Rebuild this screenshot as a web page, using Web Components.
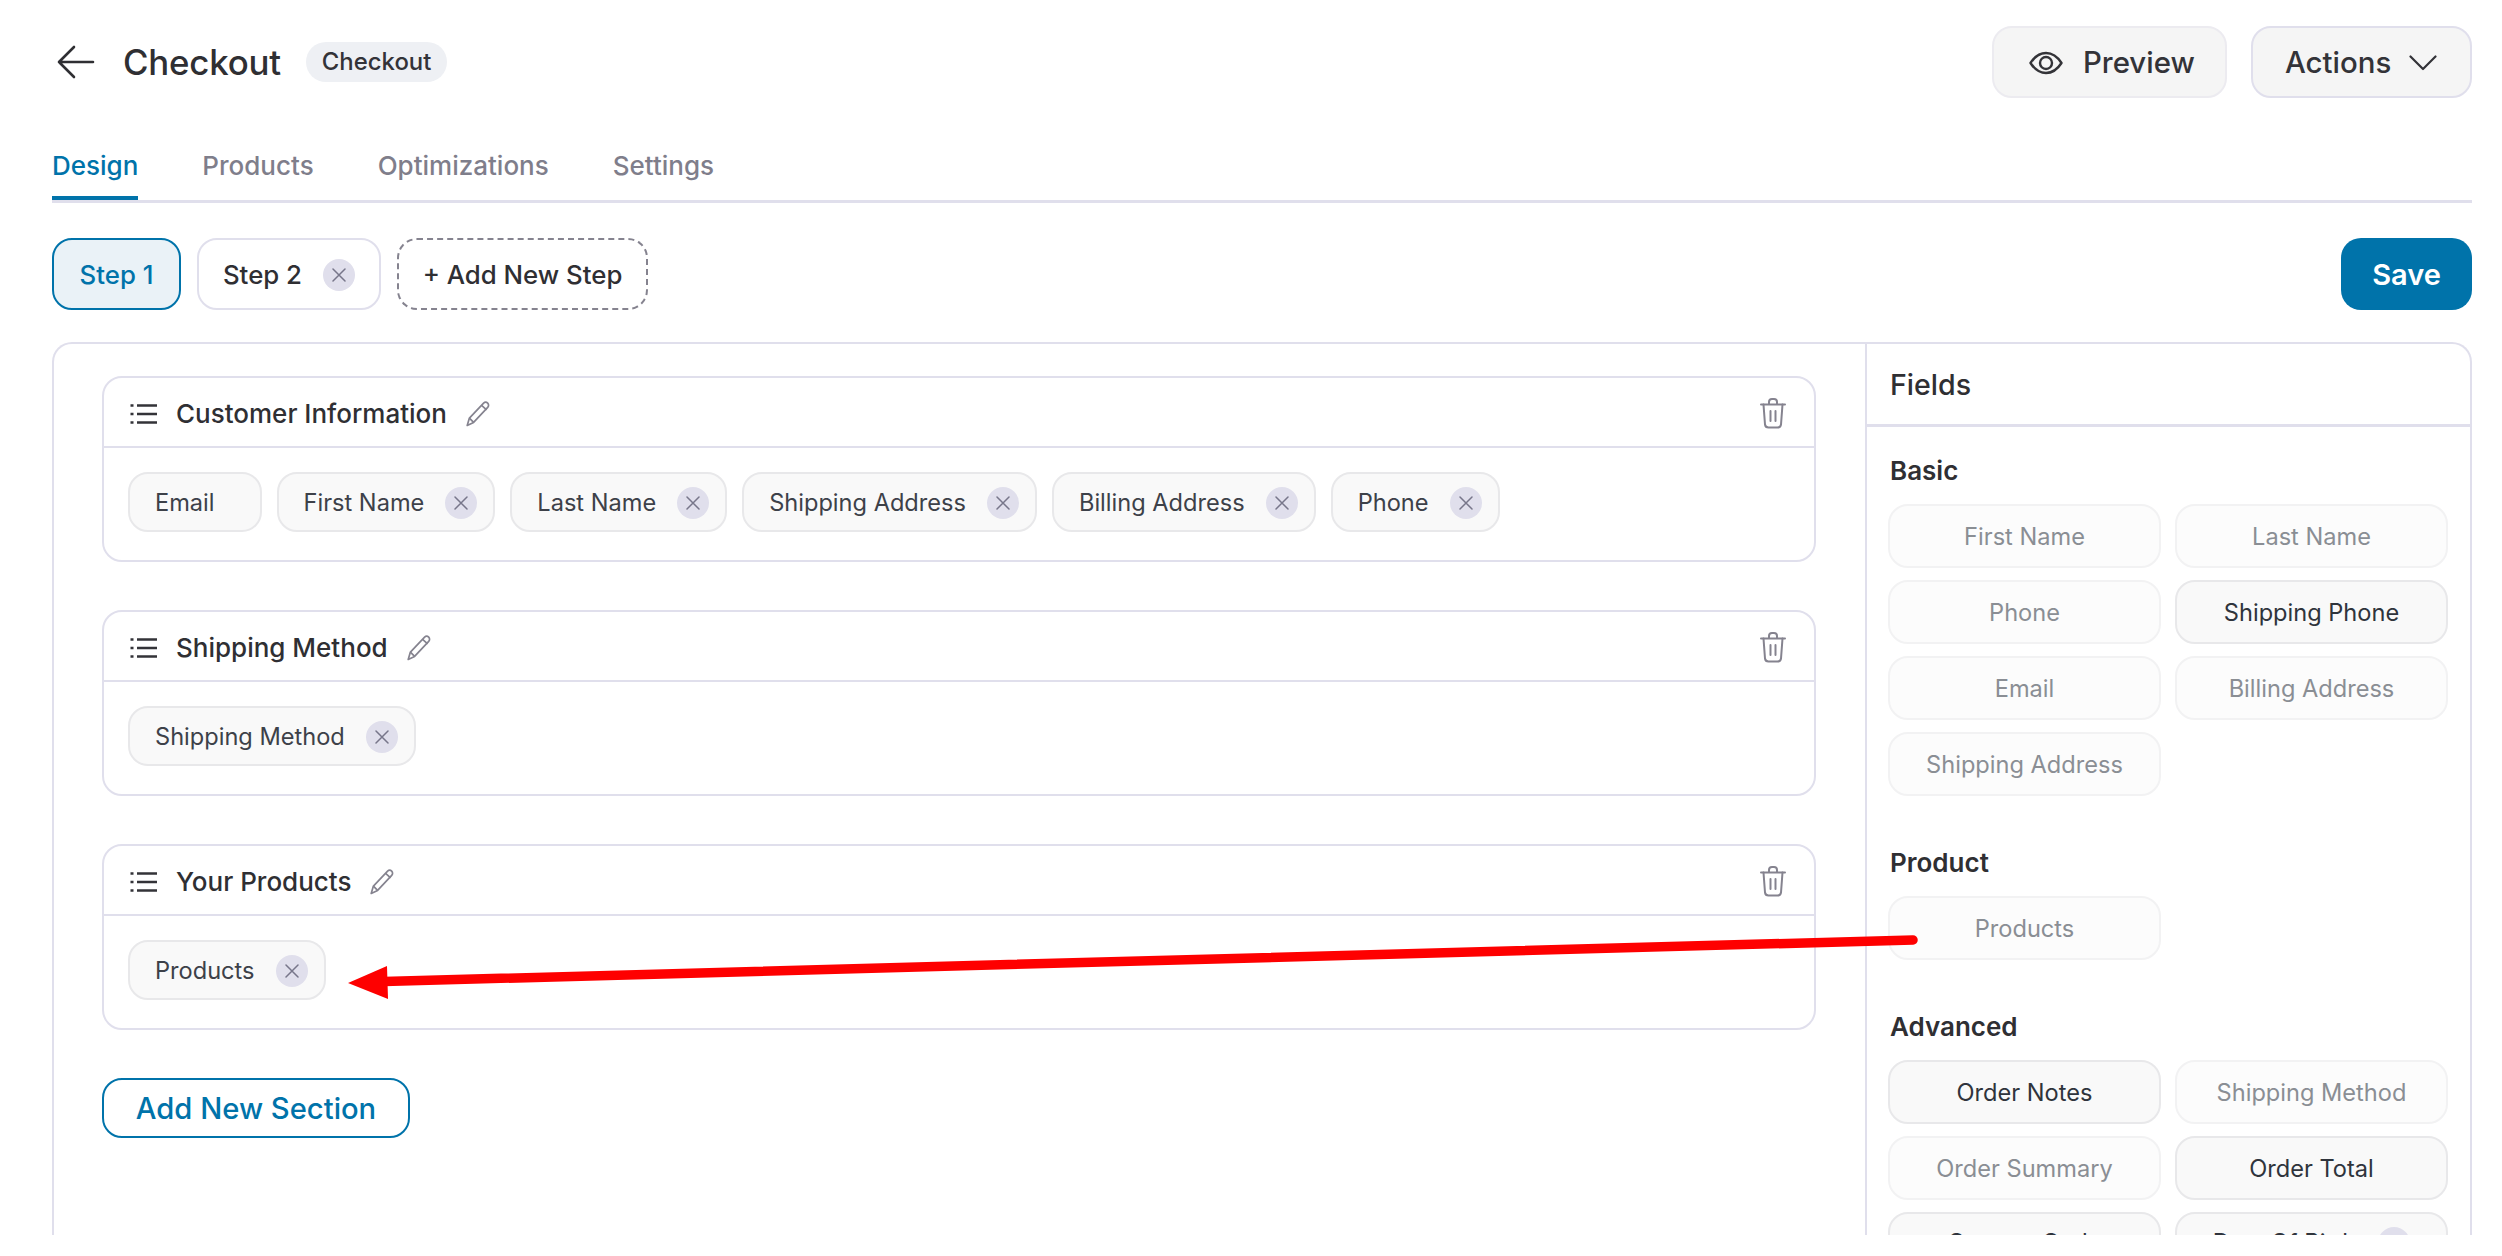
<!DOCTYPE html>
<html lang="en">
<head>
<meta charset="utf-8">
<title>Checkout</title>
<style>
html,body{margin:0;padding:0;background:#fff;font-family:Inter,"Liberation Sans",sans-serif;color:#2f2f33}
</style>
</head>
<body>
<app-shell>
  <page-header slot="header" title="Checkout" tag="Checkout"></page-header>
  <tab-bar slot="tabs"><tab-item active>Design</tab-item><tab-item>Products</tab-item><tab-item>Optimizations</tab-item><tab-item>Settings</tab-item></tab-bar>
  <step-bar slot="steps">
    <step-pill active style="width:129px">Step 1</step-pill>
    <step-pill removable style="width:184px">Step 2</step-pill>
    <step-pill dashed style="width:251px">+ Add New Step</step-pill>
  </step-bar>
  <main-board slot="board">
    <section-card heading="Customer Information">
      <field-chip wide>Email</field-chip>
      <field-chip removable>First Name</field-chip>
      <field-chip removable>Last Name</field-chip>
      <field-chip removable>Shipping Address</field-chip>
      <field-chip removable>Billing Address</field-chip>
      <field-chip removable>Phone</field-chip>
    </section-card>
    <section-card heading="Shipping Method">
      <field-chip removable>Shipping Method</field-chip>
    </section-card>
    <section-card heading="Your Products">
      <field-chip removable>Products</field-chip>
    </section-card>
    <outline-button>Add New Section</outline-button>
    <fields-panel slot="panel">
      <field-group heading="Basic">
        <palette-chip off>First Name</palette-chip>
        <palette-chip off>Last Name</palette-chip>
        <palette-chip off>Phone</palette-chip>
        <palette-chip>Shipping Phone</palette-chip>
        <palette-chip off>Email</palette-chip>
        <palette-chip off>Billing Address</palette-chip>
        <palette-chip off>Shipping Address</palette-chip>
      </field-group>
      <field-group heading="Product">
        <palette-chip off>Products</palette-chip>
      </field-group>
      <field-group heading="Advanced">
        <palette-chip>Order Notes</palette-chip>
        <palette-chip off>Shipping Method</palette-chip>
        <palette-chip off>Order Summary</palette-chip>
        <palette-chip>Order Total</palette-chip>
        <palette-chip tight>Coupon Code</palette-chip>
        <palette-chip tight removable>Date Of Birth</palette-chip>
      </field-group>
    </fields-panel>
  </main-board>
</app-shell>
<script>
const ICONS = {
  back:'<svg width="38" height="34" viewBox="0 0 38 34" fill="none" stroke="#2f2f33" stroke-width="2.6" stroke-linecap="round" stroke-linejoin="round"><path d="M36 17H2M17 2 2 17l15 15"/></svg>',
  eye:'<svg width="34" height="24" viewBox="0 0 34 24" fill="none" stroke="#333338" stroke-width="2.4" stroke-linejoin="round"><path d="M1.5 12C6 5 11 2 17 2s11 3 15.5 10C28 19 23 22 17 22S6 19 1.5 12Z"/><circle cx="17" cy="12" r="6"/></svg>',
  chevron:'<svg width="28" height="16" viewBox="0 0 28 16" fill="none" stroke="#333338" stroke-width="2.2" stroke-linecap="round" stroke-linejoin="round"><path d="M1.5 1.5 14 14 26.5 1.5"/></svg>',
  list:'<svg width="28" height="22" viewBox="0 0 28 22" fill="none" stroke="#333338" stroke-width="2.6"><path d="M7 2.5h20M7 11h20M7 19.5h20"/><path d="M.5 2.5h3M.5 11h3M.5 19.5h3"/></svg>',
  pencil:'<svg width="26" height="26" viewBox="0 0 26 26" fill="none" stroke="#85838f" stroke-width="1.7" stroke-linejoin="round"><path d="M18.6 2.2c1.2-1.2 3-1.1 4.1 0s1.2 2.9 0 4.1L8.6 21.4 2.2 24.4l2.2-7.3Z"/><path d="M16.6 4.3l5 4.6M4.4 17.1l4.2 4.3"/></svg>',
  trash:'<svg width="26" height="31" viewBox="0 0 26 31" fill="none" stroke="#85838f" stroke-width="2" stroke-linecap="round" stroke-linejoin="round"><path d="M1 6.5h24M9 6.5V4a3 3 0 0 1 3-3h2a3 3 0 0 1 3 3v2.5"/><path d="M3.5 6.5 5 26.5a3.5 3.5 0 0 0 3.5 3h9a3.5 3.5 0 0 0 3.5-3l1.5-20"/><path d="M10.500 13v10M15.500 13v10"/></svg>'
};
function define(name, css, html, extra){
  const tpl = document.createElement('template');
  tpl.innerHTML = '<style>'+css+'</style>'+html;
  customElements.define(name, class extends HTMLElement{
    constructor(){super();this.attachShadow({mode:'open'}).appendChild(tpl.content.cloneNode(true));}
    connectedCallback(){ if(extra) extra(this, this.shadowRoot); }
  });
}
const closeBtn = r => { const s = r.querySelector('.x'); if(s) s.innerHTML='<svg width="14" height="14" viewBox="0 0 14 14" stroke="#77768a" stroke-width="1.5" stroke-linecap="round"><path d="M1 1l12 12M13 1 1 13"/></svg>'; };

define('icon-mark', ':host{display:inline-flex;align-items:center;justify-content:center;flex:none}svg{display:block}', '<span id="i" style="display:contents"></span>',
  (h,r)=>{ r.getElementById('i').innerHTML = ICONS[h.getAttribute('name')]; });

define('app-shell', `
  :host{display:block;position:relative;height:1235px;overflow:hidden;padding:0 30px 0 52px;box-sizing:border-box}
  .arrow{position:absolute;left:0;top:0;pointer-events:none}
`, `
  <slot name="header"></slot><slot name="tabs"></slot><slot name="steps"></slot><slot name="board"></slot>
  <svg class="arrow" width="2502" height="1235" viewBox="0 0 2502 1235"><path d="M1913 940 384 981.500" stroke="#fe0000" stroke-width="9.500" stroke-linecap="round" fill="none"/><path d="M348 983 387 966 388 999Z" fill="#fe0000"/></svg>
`);

define('page-header', `
  :host{display:flex;align-items:center;padding-top:26px;height:72px}
  .back{margin:0 28px 0 5px}
  h1{margin:0;font:500 34.8px/1 Inter,sans-serif;color:#2f2f33;letter-spacing:-.2px}
  .tag{margin-left:25px;height:40px;padding:0 16px;border-radius:20px;background:#eef0f4;display:flex;align-items:center;font:500 23.9px/1 Inter,sans-serif;color:#333338}
  .sp{flex:1}
  .btn{height:72px;box-sizing:border-box;border:2px solid #ecebf0;border-radius:20px;background:#f5f5f5;display:flex;align-items:center;padding-top:2px;font:500 29.400px/1 Inter,sans-serif;color:#333338}
  .p{width:235px;padding-left:35px;gap:20px;margin-right:24px}
  .a{width:221px;padding-left:32px;gap:18px;border-color:#e0dfec}
`, `
  <icon-mark class="back" name="back"></icon-mark><h1></h1><span class="tag"></span><span class="sp"></span>
  <div class="btn p"><icon-mark name="eye"></icon-mark><span>Preview</span></div>
  <div class="btn a"><span>Actions</span><icon-mark name="chevron"></icon-mark></div>
`, (h,r)=>{ r.querySelector('h1').textContent=h.getAttribute('title'); r.querySelector('.tag').textContent=h.getAttribute('tag'); });

define('tab-bar', `
  :host{display:flex;gap:64px;margin-top:50px;height:52px;border-bottom:3px solid #e0dfec}
`, '<slot></slot>');
define('tab-item', `
  :host{display:block;height:52px;box-sizing:border-box;padding-top:1px;font:500 26px/34px Inter,sans-serif;color:#7f7e8b}
  :host([active]){color:#0073aa;box-shadow:inset 0 -4px 0 #0073aa}
`, '<slot></slot>');

define('step-bar', `
  :host{display:flex;gap:16px;margin-top:35px;align-items:center}
  .save{margin-left:auto;width:131px;height:72px;border-radius:20px;background:#0073aa;color:#fff;display:flex;align-items:center;justify-content:center;font:600 29px/1 Inter,sans-serif}
`, '<slot></slot><span class="save">Save</span>');
define('step-pill', `
  :host{display:flex;align-items:center;justify-content:center;gap:21px;height:72px;box-sizing:border-box;padding-top:2px;border:2px solid #e0dfec;border-radius:20px;background:#fff;font:500 25.8px/1 Inter,sans-serif;color:#2f2f33}
  :host([active]){border-color:#0073aa;background:#eaf2f7;color:#0073aa}
  :host([dashed]){border:2px dashed #85838f}
  .x{width:32px;height:32px;border-radius:50%;background:#e0dfec;display:none;align-items:center;justify-content:center}
  :host([removable]) .x{display:flex}
`, '<slot></slot><span class="x"></span>', (h,r)=>closeBtn(r));

define('main-board', `
  :host{display:flex;margin-top:32px;height:1100px;box-sizing:border-box;border:2px solid #e0dfec;border-bottom:0;border-radius:20px 20px 0 0}
  .left{width:1811px;box-sizing:border-box;padding:32px 49px 0 48px;display:flex;flex-direction:column;gap:48px}
`, '<div class="left"><slot></slot></div><slot name="panel"></slot>');

define('section-card', `
  :host{display:block;height:186px;box-sizing:border-box;border:2px solid #e0dfec;border-radius:20px}
  .head{height:68px;box-sizing:content-box;display:flex;align-items:center;padding:0 26px;border-bottom:2px solid #e0dfec;font:500 26px/1 Inter,sans-serif;color:#2f2f33}
  .head>*{position:relative;top:1.5px}
  .t{margin:0 18px 0 18px}
  .trash{margin-left:auto;margin-right:2px}
  .body{display:flex;gap:15px;padding:24px 24px 0 24px}
`, `
  <div class="head"><icon-mark name="list"></icon-mark><span class="t"></span><icon-mark name="pencil"></icon-mark><icon-mark class="trash" name="trash"></icon-mark></div>
  <div class="body"><slot></slot></div>
`, (h,r)=>{ r.querySelector('.t').textContent=h.getAttribute('heading'); });

define('field-chip', `
  :host{display:flex;align-items:center;gap:21px;height:60px;box-sizing:border-box;padding:2px 16px 0 25px;border:2px solid #e8e8ea;border-radius:20px;background:#f9f9f9;font:400 23.6px/1 Inter,sans-serif;color:#3d4149}
  :host([wide]){padding-right:45px}
  .x{width:32px;height:32px;border-radius:50%;background:#e0dfec;display:none;align-items:center;justify-content:center}
  :host([removable]) .x{display:flex}
`, '<slot></slot><span class="x"></span>', (h,r)=>closeBtn(r));

define('outline-button', `
  :host{display:flex;align-items:center;justify-content:center;width:308px;height:60px;box-sizing:border-box;padding-top:2px;border:2px solid #0073aa;border-radius:20px;font:500 29.2px/1 Inter,sans-serif;color:#0073aa;background:#fff}
`, '<slot></slot>');

define('fields-panel', `
  :host{display:block;flex:1;border-left:2px solid #e0dfec}
  .h{height:83px;box-sizing:border-box;display:flex;align-items:center;padding:2px 23px 0;border-bottom:3px solid #e0dfec;font:500 28.6px/1 Inter,sans-serif;color:#2f2f33}
  .b{padding:28px 22px 0 21px;display:flex;flex-direction:column;gap:51px}
`, '<div class="h">Fields</div><div class="b"><slot></slot></div>');

define('field-group', `
  :host{display:block}
  .t{font:600 26px/30px Inter,sans-serif;color:#2f2f33;padding-top:1px;margin:0 0 18px 2px}
  .g{display:grid;grid-template-columns:273px 273px;gap:12px 14px}
`, '<div class="t"></div><div class="g"><slot></slot></div>', (h,r)=>{ r.querySelector('.t').textContent=h.getAttribute('heading'); });

define('palette-chip', `
  :host{display:flex;align-items:center;justify-content:center;gap:22px;height:64px;box-sizing:border-box;padding-top:2px;border:2px solid #e8e8ea;border-radius:20px;background:#f9f9f9;font:400 23.6px/1 Inter,sans-serif;color:#2f343c}
  :host([off]){background:#fcfcfc;border-color:#f2f2f3;color:#8a8e94}
  :host([tight]){padding:0 0 2px}
  .x{width:32px;height:32px;border-radius:50%;background:#e0dfec;display:none;align-items:center;justify-content:center}
  :host([removable]) .x{display:flex}
`, '<slot></slot><span class="x"></span>', (h,r)=>closeBtn(r));
</script>
</body>
</html>
